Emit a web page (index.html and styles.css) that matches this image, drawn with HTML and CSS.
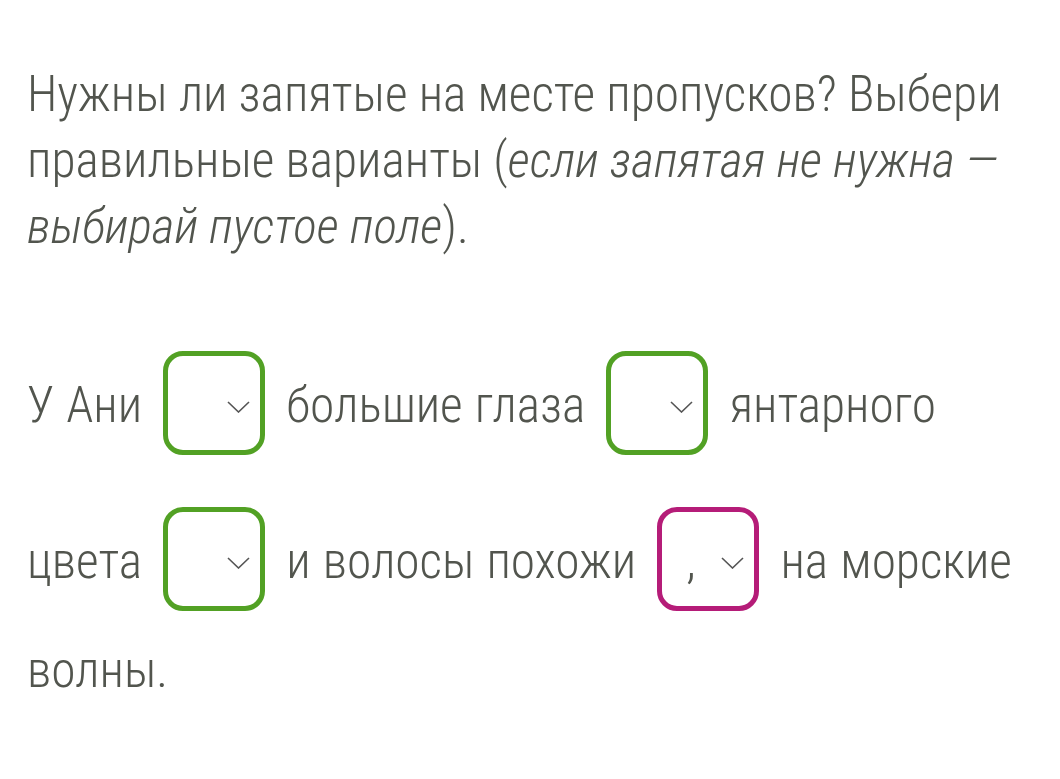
FILE: index.html
```html
<!DOCTYPE html>
<html lang="ru">
<head>
  <meta charset="UTF-8" />
  <meta name="viewport" content="width=device-width, initial-scale=1.0" />
  <title>Запятые</title>
  <link rel="stylesheet" href="styles.css">
</head>
<body>
  <div class="task">
    <p class="question">Нужны ли запятые на месте пропусков? Выбери правильные варианты (<em>если запятая не нужна — выбирай пустое поле</em>).</p>

    <p class="sentence">
      У Ани
      <span class="gap ok"><span class="val"></span><svg class="arrow" viewBox="0 0 23 12"><polyline points="1,1 11.5,11 22,1" /></svg></span>
      большие глаза
      <span class="gap ok"><span class="val"></span><svg class="arrow" viewBox="0 0 23 12"><polyline points="1,1 11.5,11 22,1" /></svg></span>
      янтарного цвета
      <span class="gap ok"><span class="val"></span><svg class="arrow" viewBox="0 0 23 12"><polyline points="1,1 11.5,11 22,1" /></svg></span>
      и волосы похожи
      <span class="gap bad"><span class="val">,</span><svg class="arrow" viewBox="0 0 23 12"><polyline points="1,1 11.5,11 22,1" /></svg></span>
      на морские волны.
    </p>
  </div>
</body>
</html>
```

FILE: styles.css
```css
body { margin: 0; background: #fff; font-family: "Roboto Condensed", Roboto, sans-serif; font-weight: 300; font-stretch: condensed; color: #52554e; }
.task { padding: 0 27px; }
.question { margin: 61px 0 0; font-size: 49.4px; line-height: 66px; }
.question em { font-style: italic; }
.sentence { margin: 66px 0 0; font-size: 49.4px; line-height: 66px; word-spacing: 1px; }

.gap {
  display: inline-block;
  width: 102px;
  height: 104px;
  box-sizing: border-box;
  margin: 26px 9px;
  padding: 5px 14px 0 24px;
  border: 5px solid #52a124;
  border-radius: 20px;
  line-height: 88px;
  white-space: nowrap;
  word-spacing: 0;
}
.gap.bad { border-color: #b51c78; }
.gap .val { display: inline-block; width: 35px; }
.arrow { width: 23px; height: 12px; vertical-align: 9px; }
.arrow polyline { fill: none; stroke: #555; stroke-width: 1.6; }
```
